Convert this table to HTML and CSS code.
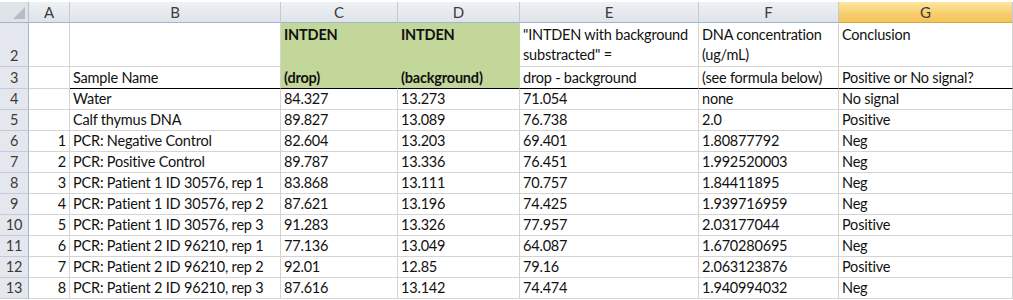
FILE: index.html
```html
<!DOCTYPE html>
<html>
<head>
<meta charset="utf-8">
<link rel="stylesheet" href="styles.css">
</head>
<body>
<div class="sheet">
  <div class="corner"><span class="tri"></span></div>
  <div class="ch">A</div>
  <div class="ch">B</div>
  <div class="ch">C</div>
  <div class="ch">D</div>
  <div class="ch">E</div>
  <div class="ch">F</div>
  <div class="ch sel">G</div>

  <div class="rh">2</div>
  <div class="c top"></div>
  <div class="c top"></div>
  <div class="c top green b">INTDEN</div>
  <div class="c top green b">INTDEN</div>
  <div class="c top">"INTDEN with background<br>substracted" =</div>
  <div class="c top">DNA concentration<br>(ug/mL)</div>
  <div class="c top">Conclusion</div>

  <div class="rh">3</div>
  <div class="c"></div>
  <div class="c thick">Sample Name</div>
  <div class="c thick green b">(drop)</div>
  <div class="c thick green b">(background)</div>
  <div class="c thick">drop - background</div>
  <div class="c thick">(see formula below)</div>
  <div class="c thick">Positive or No signal?</div>

  <div class="rh">4</div><div class="c num"></div><div class="c">Water</div><div class="c">84.327</div><div class="c">13.273</div><div class="c">71.054</div><div class="c">none</div><div class="c">No signal</div>
  <div class="rh">5</div><div class="c num"></div><div class="c">Calf thymus DNA</div><div class="c">89.827</div><div class="c">13.089</div><div class="c">76.738</div><div class="c">2.0</div><div class="c">Positive</div>
  <div class="rh">6</div><div class="c num">1</div><div class="c">PCR: Negative Control</div><div class="c">82.604</div><div class="c">13.203</div><div class="c">69.401</div><div class="c">1.80877792</div><div class="c">Neg</div>
  <div class="rh">7</div><div class="c num">2</div><div class="c">PCR: Positive Control</div><div class="c">89.787</div><div class="c">13.336</div><div class="c">76.451</div><div class="c">1.992520003</div><div class="c">Neg</div>
  <div class="rh">8</div><div class="c num">3</div><div class="c">PCR: Patient 1 ID 30576, rep 1</div><div class="c">83.868</div><div class="c">13.111</div><div class="c">70.757</div><div class="c">1.84411895</div><div class="c">Neg</div>
  <div class="rh">9</div><div class="c num">4</div><div class="c">PCR: Patient 1 ID 30576, rep 2</div><div class="c">87.621</div><div class="c">13.196</div><div class="c">74.425</div><div class="c">1.939716959</div><div class="c">Neg</div>
  <div class="rh">10</div><div class="c num">5</div><div class="c">PCR: Patient 1 ID 30576, rep 3</div><div class="c">91.283</div><div class="c">13.326</div><div class="c">77.957</div><div class="c">2.03177044</div><div class="c">Positive</div>
  <div class="rh">11</div><div class="c num">6</div><div class="c">PCR: Patient 2 ID 96210, rep 1</div><div class="c">77.136</div><div class="c">13.049</div><div class="c">64.087</div><div class="c">1.670280695</div><div class="c">Neg</div>
  <div class="rh">12</div><div class="c num">7</div><div class="c">PCR: Patient 2 ID 96210, rep 2</div><div class="c">92.01</div><div class="c">12.85</div><div class="c">79.16</div><div class="c">2.063123876</div><div class="c">Positive</div>
  <div class="rh">13</div><div class="c num">8</div><div class="c">PCR: Patient 2 ID 96210, rep 3</div><div class="c">87.616</div><div class="c">13.142</div><div class="c">74.474</div><div class="c">1.940994032</div><div class="c">Neg</div>
</div>
</body>
</html>
```
FILE: styles.css
```css
html, body {
  margin: 0;
  padding: 0;
  background: #ffffff;
  overflow: hidden;
}
body {
  width: 1013px;
  height: 300px;
  font-family: "Lato", "Liberation Sans", sans-serif;
  font-size: 14.5px;
  letter-spacing: -0.2px;
  color: #111;
}
.sheet {
  display: grid;
  grid-template-columns: 29px 41px 211px 117px 122px 179px 140px 1fr;
  grid-template-rows: 21px 44px 22px repeat(10, 21px);
  padding-top: 2px;
  border-top: 1px solid #c9cfd8;
  margin-top: -1px;
}
.sheet > div {
  box-sizing: border-box;
  border-right: 1px solid #d4d4d4;
  border-bottom: 1px solid #d4d4d4;
  white-space: nowrap;
  overflow: hidden;
}
.corner {
  background: #dfe4ea;
  position: relative;
  border-right-color: #b9c0ca !important;
  border-bottom-color: #9eb6ce !important;
}
.tri {
  position: absolute;
  right: 3px;
  bottom: 3px;
  width: 0;
  height: 0;
  border-left: 12px solid transparent;
  border-bottom: 12px solid #b7bdc6;
}
.ch {
  background: linear-gradient(#eef1f5, #dfe4ea);
  border-right-color: #c4cad3 !important;
  border-bottom-color: #9eb6ce !important;
  color: #3b3b3b;
  text-align: center;
  line-height: 20px;
  font-size: 15px;
  letter-spacing: 0;
}
.ch.sel {
  background: linear-gradient(#fde6a0, #f7cd6c 60%, #f4c35b);
  border-bottom-color: #d9a742 !important;
}
.rh {
  background: #e4e8ee;
  border-right-color: #9eb6ce !important;
  border-bottom-color: #c5cbd4 !important;
  color: #3b3b3b;
  text-align: center;
  display: flex;
  align-items: flex-end;
  justify-content: center;
  line-height: 20px;
}
.c {
  display: flex;
  align-items: flex-end;
  padding: 0 3px 0 3px;
  line-height: 20px;
}
.c.top {
  align-items: flex-start;
  padding-top: 2px;
  display: block;
}
.c.num {
  justify-content: flex-end;
}
.green {
  background: #c4d79b;
  border-color: #c4d79b !important;
}
.b {
  font-weight: bold;
}
.thick {
  border-bottom: 1px solid #000 !important;
}
```
